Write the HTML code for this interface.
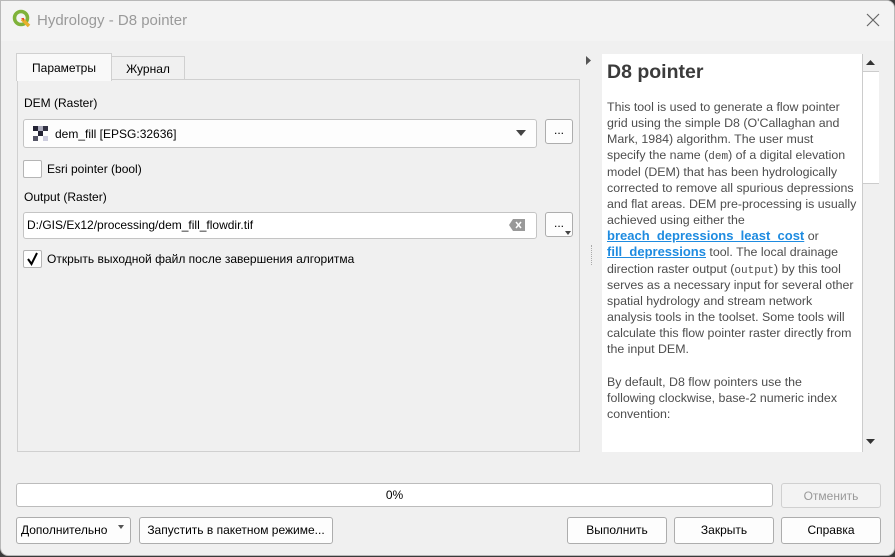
<!DOCTYPE html>
<html><head><meta charset="utf-8"><style>
*{box-sizing:border-box;margin:0;padding:0}
body{width:895px;height:557px;overflow:hidden;background:#3a3a3a;font-family:"Liberation Sans","DejaVu Sans",sans-serif;font-size:12px;color:#000;position:relative}
.win{position:absolute;left:0;top:0;width:895px;height:556px;background:#f0f0f0;border:1px solid #b8b8b8;border-radius:0 8px 8px 8px;overflow:hidden}
.title{position:absolute;left:0;top:0;width:100%;height:40px;background:#f3f3f3}
.a{position:absolute}
.btn{position:absolute;background:#fdfdfd;border:1px solid #adadad;border-radius:3px;text-align:center;font-size:12px;line-height:24px}
.cb{position:absolute;width:17px;height:17px;background:#fff;border:1px solid #b5b5b5;border-radius:2px}
.help{position:absolute;left:601px;top:53px;width:260px;height:398px;background:#fff;overflow:hidden;padding:7px 0 0 5px;color:#4d4d4d;font-size:12.4px;line-height:16.15px;white-space:nowrap}
.help h1{font-size:19.5px;color:#3b3b3b;font-weight:bold;margin:0 0 16px 0;line-height:22px}
.help a{color:#1e8be0;font-weight:bold;text-decoration:underline;font-size:13px;line-height:10px}
.mono{font-family:"Liberation Mono",monospace;font-size:11px;line-height:10px}
</style></head><body>
<div class="win">
 <div class="title"></div>
 <svg class="a" style="left:11px;top:8px" width="20" height="20" viewBox="0 0 20 20"><circle cx="9" cy="9" r="6.5" fill="none" stroke="#7fb23a" stroke-width="3.5"/><path d="M10 10 L17 17" stroke="#e8b02c" stroke-width="3.5"/><path d="M9 9 l3 0 0 3z" fill="#e84b2c"/></svg>
 <div class="a" style="left:36px;top:11px;font-size:15px;color:#9a9a9a">Hydrology - D8 pointer</div>
 <svg class="a" style="left:865px;top:12px" width="14" height="14"><path d="M1 1L13 13M13 1L1 13" stroke="#666" stroke-width="1.2"/></svg>

 <div class="a" style="left:16px;top:78px;width:563px;height:373px;border:1px solid #d0d0d0;background:#f0f0f0"></div>
 <div class="a" style="left:110px;top:55px;width:74px;height:24px;border:1px solid #d0d0d0;background:#f0f0f0;text-align:center;line-height:24px">Журнал</div>
 <div class="a" style="left:15px;top:52px;width:96px;height:28px;border:1px solid #d0d0d0;border-bottom:none;background:#f9f9f9;text-align:center;line-height:28px">Параметры</div>

 <div class="a" style="left:23px;top:95px">DEM (Raster)</div>
 <div class="a" style="left:22px;top:118px;width:514px;height:29px;border:1px solid #c4c4c4;border-radius:3px;background:#fdfdfd"></div>
 <svg class="a" style="left:32px;top:125px" width="15" height="15"><rect x="0" y="0" width="5" height="5" fill="#223"/><rect x="10" y="0" width="5" height="5" fill="#334"/><rect x="5" y="5" width="5" height="5" fill="#223"/><rect x="0" y="10" width="5" height="5" fill="#556"/><rect x="5" y="0" width="5" height="5" fill="#aab"/><rect x="10" y="10" width="5" height="5" fill="#ccd"/></svg>
 <div class="a" style="left:54px;top:126px">dem_fill [EPSG:32636]</div>
 <svg class="a" style="left:515px;top:129px" width="10" height="6"><path d="M0 0H10L5 6z" fill="#444"/></svg>
 <div class="btn" style="left:544px;top:118px;width:28px;height:25px;line-height:20px">...</div>

 <div class="cb" style="left:22px;top:159px;width:19px;height:18px"></div>
 <div class="a" style="left:46px;top:161px">Esri pointer (bool)</div>

 <div class="a" style="left:23px;top:189px">Output (Raster)</div>
 <div class="a" style="left:22px;top:211px;width:514px;height:27px;border:1px solid #c4c4c4;border-radius:3px;background:#fff"></div>
 <div class="a" style="left:26px;top:217px">D:/GIS/Ex12/processing/dem_fill_flowdir.tif</div>
 <svg class="a" style="left:508px;top:218px" width="16" height="12"><path d="M4 0H16V12H4L0 6z" fill="#999"/><path d="M7 3L12 9M12 3L7 9" stroke="#fff" stroke-width="1.5"/></svg>
 <div class="btn" style="left:544px;top:211px;width:28px;height:25px;line-height:20px">...</div>
 <svg class="a" style="left:564px;top:230px" width="6" height="4"><path d="M0 0H6L3 4z" fill="#444"/></svg>

 <div class="cb" style="left:22px;top:249px;width:19px;height:18px"></div>
 <svg class="a" style="left:25px;top:251px" width="14" height="14"><path d="M2 7L5.5 12L11 1" stroke="#000" stroke-width="2" fill="none"/></svg>
 <div class="a" style="left:46px;top:251px">Открыть выходной файл после завершения алгоритма</div>

 <svg class="a" style="left:585px;top:55px" width="5" height="9"><path d="M0 0L5 4.5L0 9z" fill="#555"/></svg>
 <div class="a" style="left:590px;top:244px;width:1px;height:20px;border-left:1px dotted #aaa"></div>

 <div class="help">
  <h1>D8 pointer</h1>
  This tool is used to generate a flow pointer<br>grid using the simple D8 (O'Callaghan and<br>Mark, 1984) algorithm. The user must<br>specify the name (<span class="mono">dem</span>) of a digital elevation<br>model (DEM) that has been hydrologically<br>corrected to remove all spurious depressions<br>and flat areas. DEM pre-processing is usually<br>achieved using either the<br><a>breach_depressions_least_cost</a> or<br><a>fill_depressions</a> tool. The local drainage<br>direction raster output (<span class="mono">output</span>) by this tool<br>serves as a necessary input for several other<br>spatial hydrology and stream network<br>analysis tools in the toolset. Some tools will<br>calculate this flow pointer raster directly from<br>the input DEM.<br><br>
  By default, D8 flow pointers use the<br>following clockwise, base-2 numeric index<br>convention:
 </div>
 <div class="a" style="left:861px;top:53px;width:17px;height:398px;background:#f0f0f0;border-left:1px solid #ccc"></div>
 <div class="a" style="left:862px;top:70px;width:16px;height:113px;background:#fff;border-top:1px solid #ccc;border-bottom:1px solid #ccc"></div>
 <svg class="a" style="left:865px;top:59px" width="9" height="5"><path d="M0 5H9L4.5 0z" fill="#333"/></svg>
 <svg class="a" style="left:865px;top:438px" width="9" height="5"><path d="M0 0H9L4.5 5z" fill="#333"/></svg>

 <div class="a" style="left:15px;top:482px;width:757px;height:24px;border:1px solid #bcbcbc;border-radius:3px;background:#fff;text-align:center;line-height:22px">0%</div>
 <div class="btn" style="left:780px;top:482px;width:100px;height:25px;color:#999;background:#f3f3f3;border-color:#d0d0d0">Отменить</div>
 <div class="btn" style="left:15px;top:516px;width:115px;height:27px;text-align:left;padding-left:4px">Дополнительно</div>
 <svg class="a" style="left:117px;top:524px" width="6" height="4"><path d="M0 0H6L3 4z" fill="#555"/></svg>
 <div class="btn" style="left:138px;top:516px;width:194px;height:27px">Запустить в пакетном режиме...</div>
 <div class="btn" style="left:566px;top:516px;width:100px;height:27px">Выполнить</div>
 <div class="btn" style="left:673px;top:516px;width:100px;height:27px">Закрыть</div>
 <div class="btn" style="left:780px;top:516px;width:100px;height:27px">Справка</div>
</div>
</body></html>
